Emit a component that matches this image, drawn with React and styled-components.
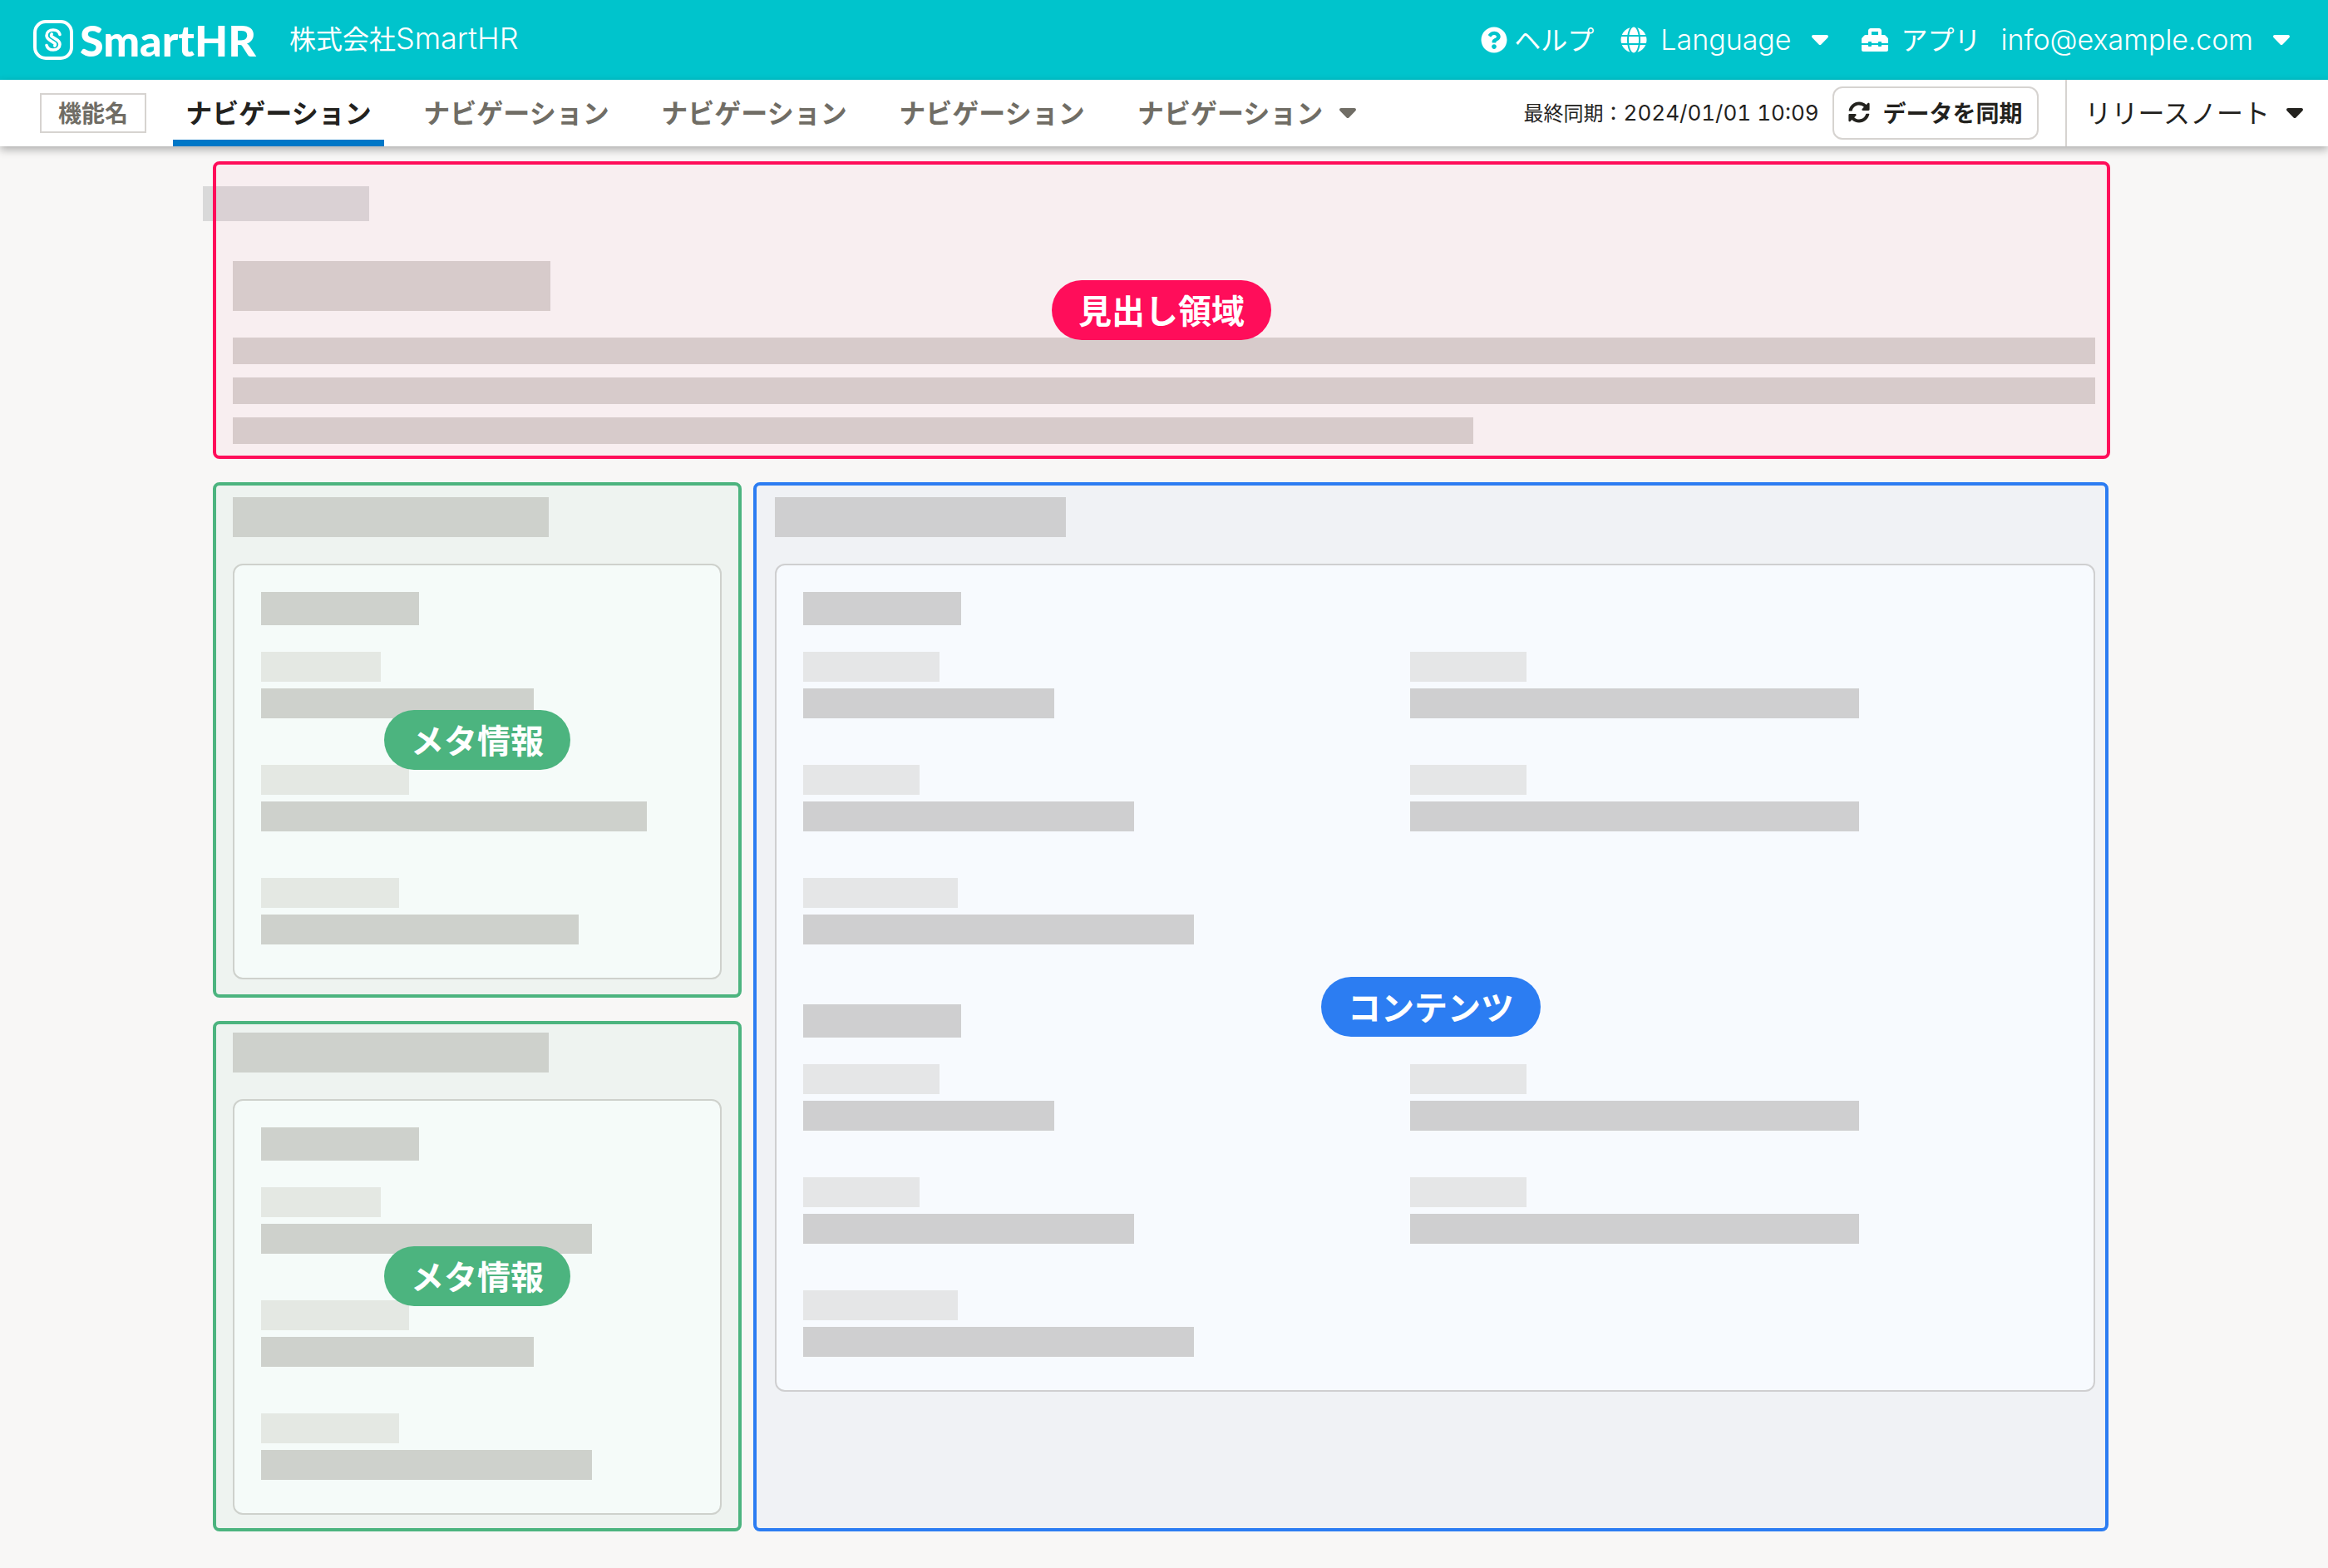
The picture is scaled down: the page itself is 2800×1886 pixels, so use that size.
import React from "react";
import styled, { createGlobalStyle } from "styled-components";
import { FaQuestionCircle, FaGlobe, FaToolbox, FaSyncAlt } from "react-icons/fa";

const color = {
  brand: "#00c4cc",
  page: "#f8f7f6",
  text: "#23221e",
  muted: "#706d65",
  border: "#d6d3d0",
  bar: "#d6d3d0",
  barLight: "#edebe8",
  crumb: "#d9d9d9",
  active: "#0077c7",
};

const tones = {
  pink: { line: "#ff0d5a", fill: "rgba(255, 13, 90, 0.04)" },
  green: { line: "#4cb47f", fill: "rgba(64, 180, 140, 0.055)" },
  blue: { line: "#2c7df2", fill: "rgba(44, 125, 242, 0.04)" },
};

const GlobalStyle = createGlobalStyle`
  *, *::before, *::after { box-sizing: border-box; }
  body {
    margin: 0;
    background: ${color.page};
    color: ${color.text};
    font-family: "Noto Sans CJK JP", "Liberation Sans", sans-serif;
    font-size: 32px;
    line-height: 1;
  }
  button { font: inherit; color: inherit; background: none; border: 0; padding: 0; cursor: pointer; }
  a { color: inherit; text-decoration: none; }
  svg { display: block; flex: none; }
`;

const Header = styled.header`
  display: flex;
  align-items: center;
  justify-content: space-between;
  height: 96px;
  padding: 0 46px 0 40px;
  background: ${color.brand};
  color: #fff;
  white-space: nowrap;
`;

const Brand = styled.div`
  display: flex;
  align-items: center;
  gap: 40px;
`;

const Logo = styled.a`
  display: flex;
  align-items: center;
  gap: 8px;
  font-family: Lato, "Liberation Sans", sans-serif;
  font-size: 52px;
  font-weight: 900;
`;

const Account = styled.div`
  display: flex;
  align-items: center;
`;

const HeaderLink = styled.a`
  display: flex;
  align-items: center;
  gap: 8px;
  margin-right: 32px;
`;

const HeaderButton = styled.button`
  display: flex;
  align-items: center;
  gap: 16px;
  margin-right: ${(p) => p.$after || 0}px;
`;

const MenuLabel = styled.span`
  display: flex;
  align-items: center;
  gap: 24px;
`;

const Latin = styled.span`
  font-family: "Inter", "Liberation Sans", sans-serif;
  font-size: ${(p) => p.$size || 34}px;
  font-weight: ${(p) => p.$weight || 300};
  font-variant-numeric: tabular-nums;
`;

const NavBar = styled.div`
  position: relative;
  z-index: 1;
  display: flex;
  align-items: center;
  justify-content: space-between;
  height: 80px;
  padding-left: 48px;
  background: #fff;
  box-shadow: 0 4px 10px rgba(3, 3, 2, 0.3);
  white-space: nowrap;
`;

const NavGroup = styled.div`
  display: flex;
  align-items: center;
  height: 100%;
`;

const FeatureName = styled.span`
  display: flex;
  align-items: center;
  justify-content: center;
  width: 128px;
  height: 48px;
  margin-right: 32px;
  padding-bottom: 2px;
  border: 2px solid ${color.border};
  color: ${color.muted};
  font-size: 28px;
  font-weight: 700;
`;

const Tabs = styled.nav`
  display: flex;
  gap: 32px;
  height: 100%;
`;

const Tab = styled.a`
  display: flex;
  align-items: center;
  justify-content: center;
  width: 254px;
  border-top: 4px solid transparent;
  border-bottom: 8px solid ${(p) => (p.$active ? color.active : "transparent")};
  color: ${(p) => (p.$active ? color.text : color.muted)};
  font-weight: 700;
`;

const MenuText = styled.span`
  padding-bottom: 4px;
`;

const TabMenu = styled.button`
  && {
    display: flex;
    align-items: center;
    gap: 20px;
    padding: 0 16px;
    color: ${color.muted};
    font-weight: 700;
  }
`;

const SyncTime = styled.span`
  margin-right: 16px;
  font-size: 24px;
`;

const SyncButton = styled.button`
  && {
    display: flex;
    align-items: center;
    justify-content: center;
    gap: 16px;
    width: 248px;
    height: 64px;
    margin-right: 32px;
    padding-bottom: 2px;
    border: 2px solid ${color.border};
    border-radius: 12px;
    background: #fff;
    font-size: 28px;
    font-weight: 700;
  }
`;

const ReleaseNotes = styled.button`
  && {
    display: flex;
    align-items: center;
    gap: 20px;
    height: 100%;
    padding: 0 30px 0 22px;
    border-left: 2px solid ${color.border};
  }
`;

const Main = styled.main`
  width: 80%;
  margin: 0 auto;
  padding: 48px 0 64px;
`;

const Region = styled.section`
  position: relative;
`;

const HeadingRegion = styled(Region)`
  margin-bottom: 64px;
`;

const Frame = styled.div`
  position: absolute;
  inset: ${(p) => p.$inset};
  display: flex;
  align-items: center;
  justify-content: center;
  border: 4px solid ${(p) => tones[p.$tone].line};
  border-radius: 8px;
  background: ${(p) => tones[p.$tone].fill};
`;

const Pill = styled.span`
  display: flex;
  align-items: center;
  height: 72px;
  padding: 0 32px 2px;
  border-radius: 36px;
  background: ${(p) => tones[p.$tone].line};
  color: #fff;
  font-size: 40px;
  font-weight: 700;
  white-space: nowrap;
`;

const Bar = styled.div`
  width: ${(p) => (p.$w ? `${p.$w}px` : "100%")};
  max-width: 100%;
  height: ${(p) => p.$h || 36}px;
  background: ${(p) => (p.$light ? color.barLight : color.bar)};
`;

const Breadcrumb = styled(Bar)`
  margin: 0 0 48px -36px;
  background: ${color.crumb};
`;

const Lines = styled.div`
  display: flex;
  flex-direction: column;
  gap: 16px;
  margin-top: 32px;
`;

const Columns = styled.div`
  display: grid;
  grid-template-columns: 588fr 1588fr;
  gap: 64px;
`;

const Side = styled.div`
  display: flex;
  flex-direction: column;
  gap: 64px;
`;

const Card = styled.div`
  display: flex;
  flex-direction: column;
  gap: 72px;
  margin-top: 32px;
  padding: 32px 32px 40px;
  border: 2px solid ${color.border};
  border-radius: 12px;
  background: #fff;
`;

const Fields = styled.div`
  display: grid;
  grid-template-columns: ${(p) => (p.$two ? "48% 52%" : "100%")};
  row-gap: 56px;
  margin-top: 32px;
`;

const Field = styled.div`
  display: flex;
  flex-direction: column;
  gap: 8px;
`;

function Caret() {
  return (
    <svg width="20" height="12" viewBox="0 0 20 12" fill="currentColor" aria-hidden="true">
      <path d="M2 0h16c1.800 0 2.600 2 1.400 3.200l-8 8.200c-.8.800-2 .8-2.800 0l-8-8.200C-.6 2 .2 0 2 0z" />
    </svg>
  );
}

function LogoMark() {
  return (
    <svg width="48" height="48" viewBox="0 0 48 48" fill="none" stroke="#fff" aria-hidden="true">
      <rect x="2" y="2" width="44" height="44" rx="13" strokeWidth="4" />
      <g strokeWidth="3.600" strokeLinecap="round">
        <path d="M32 17.500C31 14 28 12 24 12c-4.600 0-8 2.700-8 6.800 0 3.600 2.600 5 5.600 6.700l3.900 2.500c1 .8 1 2 .3 3" />
        <path d="M16 30.500C17 34 20 36 24 36c4.600 0 8-2.700 8-6.800 0-3.600-2.600-5-5.600-6.700l-3.900-2.500c-1-.8-1-2-.3-3" />
      </g>
    </svg>
  );
}

function Group({ rows, two }) {
  return (
    <div>
      <Bar $w={190} $h={40} />
      <Fields $two={two}>
        {rows.map(([label, value], i) => (
          <Field key={i}>
            <Bar $w={label} $light />
            <Bar $w={value} />
          </Field>
        ))}
      </Fields>
    </div>
  );
}

function Panel({ tone, label, inset, title, groups, two }) {
  return (
    <Region aria-label={label}>
      <Bar $w={title} $h={48} />
      <Card>
        {groups.map((rows, i) => (
          <Group key={i} rows={rows} two={two} />
        ))}
      </Card>
      <Frame $tone={tone} $inset={inset}>
        <Pill $tone={tone}>{label}</Pill>
      </Frame>
    </Region>
  );
}

const metaFirst = [[144, 328], [178, 464], [166, 382]];
const metaSecond = [[144, 398], [178, 328], [166, 398]];
const contentRows = [[164, 302], [140, 540], [140, 398], [140, 540], [186, 470]];

export default function App() {
  return (
    <>
      <GlobalStyle />
      <Header>
        <Brand>
          <Logo href="#">
            <LogoMark />
            SmartHR
          </Logo>
          <MenuText>株式会社<Latin $size={36}>SmartHR</Latin></MenuText>
        </Brand>
        <Account>
          <HeaderLink href="#">
            <FaQuestionCircle size={32} />
            <MenuText>ヘルプ</MenuText>
          </HeaderLink>
          <HeaderButton $after={40}>
            <FaGlobe size={32} />
            <MenuLabel>
              <Latin>Language</Latin>
              <Caret />
            </MenuLabel>
          </HeaderButton>
          <HeaderButton $after={24}>
            <FaToolbox size={32} />
            <MenuText>アプリ</MenuText>
          </HeaderButton>
          <HeaderButton>
            <MenuLabel>
              <Latin>info@example.com</Latin>
              <Caret />
            </MenuLabel>
          </HeaderButton>
        </Account>
      </Header>
      <NavBar>
        <NavGroup>
          <FeatureName>機能名</FeatureName>
          <Tabs>
            <Tab href="#" $active aria-current="page">ナビゲーション</Tab>
            <Tab href="#">ナビゲーション</Tab>
            <Tab href="#">ナビゲーション</Tab>
            <Tab href="#">ナビゲーション</Tab>
            <TabMenu>
              <MenuText>ナビゲーション</MenuText>
              <Caret />
            </TabMenu>
          </Tabs>
        </NavGroup>
        <NavGroup>
          <SyncTime>最終同期：<Latin $size={26} $weight={400}>2024/01/01 10:09</Latin></SyncTime>
          <SyncButton>
            <FaSyncAlt size={26} />
            データを同期
          </SyncButton>
          <ReleaseNotes>
            <MenuText>リリースノート</MenuText>
            <Caret />
          </ReleaseNotes>
        </NavGroup>
      </NavBar>
      <Main>
        <HeadingRegion aria-label="見出し領域">
          <Breadcrumb $w={200} $h={42} />
          <Bar $w={382} $h={60} />
          <Lines>
            <Bar $h={32} />
            <Bar $h={32} />
            <Bar $w={1492} $h={32} />
          </Lines>
          <Frame $tone="pink" $inset="-30px -18px -18px -24px">
            <Pill $tone="pink">見出し領域</Pill>
          </Frame>
        </HeadingRegion>
        <Columns>
          <Side>
            <Panel tone="green" label="メタ情報" inset="-18px -24px -22px" title={380} groups={[metaFirst]} />
            <Panel tone="green" label="メタ情報" inset="-14px -24px -20px" title={380} groups={[metaSecond]} />
          </Side>
          <Panel
            tone="blue"
            label="コンテンツ"
            inset="-18px -16px -20px -26px"
            title={350}
            groups={[contentRows, contentRows]}
            two
          />
        </Columns>
      </Main>
    </>
  );
}
